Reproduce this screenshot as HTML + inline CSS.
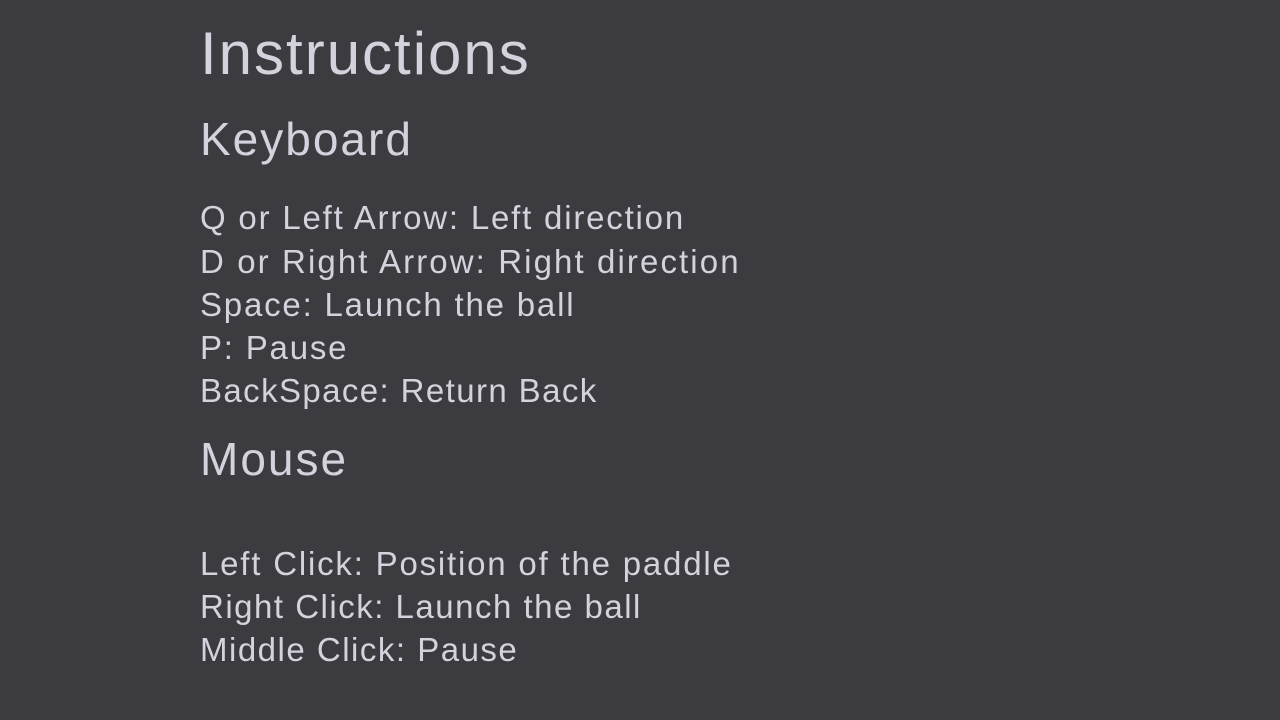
<!DOCTYPE html>
<html><head><meta charset="utf-8"><style>
html,body{margin:0;padding:0;width:1280px;height:720px;background:#3c3b3f;overflow:hidden}
div{position:absolute;left:200px;color:#d4d2dc;font-family:"Liberation Sans","DejaVu Sans",sans-serif;line-height:1;white-space:nowrap}
.t{font-size:60px;top:24px;letter-spacing:2px}
.h{font-size:46px;letter-spacing:2px}
.b{font-size:33px;letter-spacing:1.8px}
</style></head><body>
<div class="t">Instructions</div>
<div class="h" style="top:116px">Keyboard</div>
<div class="b" style="top:201px">Q or Left Arrow: Left direction</div>
<div class="b" style="top:245px;letter-spacing:2.1px">D or Right Arrow: Right direction</div>
<div class="b" style="top:288px">Space: Launch the ball</div>
<div class="b" style="top:331px">P: Pause</div>
<div class="b" style="top:374px;letter-spacing:1.4px">BackSpace: Return Back</div>
<div class="h" style="top:436px">Mouse</div>
<div class="b" style="top:547px">Left Click: Position of the paddle</div>
<div class="b" style="top:590px;letter-spacing:1.5px">Right Click: Launch the ball</div>
<div class="b" style="top:633px;letter-spacing:1.5px">Middle Click: Pause</div>
</body></html>
